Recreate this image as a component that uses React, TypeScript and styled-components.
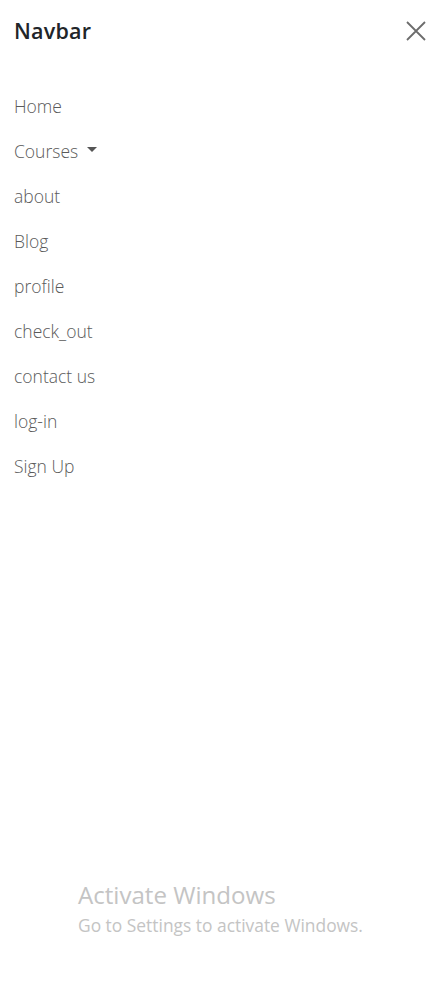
import React from "react";
import styled, { createGlobalStyle } from "styled-components";

const Global = createGlobalStyle`
  html, body { margin: 0; padding: 0; background: #fff; }
  body { font-family: "Open Sans", "Noto Sans", sans-serif; }
  * { box-sizing: border-box; }
`;

const Panel = styled.div`
  position: relative;
  width: 444px;
  height: 987px;
  background: #fff;
  overflow: hidden;
`;

const Header = styled.div`
  display: flex;
  align-items: center;
  justify-content: space-between;
  padding: 16px 14px 16px 14px;
  height: 62px;
`;

const Title = styled.h5`
  margin: 0;
  font-size: 21.5px;
  font-weight: 600;
  color: #212529;
  line-height: 30px;
  letter-spacing: 0.2px;
`;

const CloseButton = styled.button`
  border: 0;
  background: transparent;
  padding: 0;
  width: 24px;
  height: 24px;
  display: flex;
  align-items: center;
  justify-content: center;
  margin-right: 2px;
  cursor: pointer;
`;

const Body = styled.nav`
  padding: 21px 14px 0 14px;
`;

const NavList = styled.ul`
  list-style: none;
  margin: 0;
  padding: 0;
  display: flex;
  flex-direction: column;
`;

const NavItem = styled.li`
  height: 45px;
  display: flex;
  align-items: center;
`;

const NavLink = styled.a`
  font-size: 17.5px;
  font-weight: 300;
  color: #5a5a5a;
  text-decoration: none;
  display: flex;
  align-items: center;
  gap: 9px;
`;

const Caret = styled.span`
  display: inline-block;
  width: 0;
  height: 0;
  border-left: 5px solid transparent;
  border-right: 5px solid transparent;
  border-top: 5px solid #555;
  margin-top: -2px;
`;

const Watermark = styled.div`
  position: absolute;
  left: 78px;
  top: 879px;
  color: #c4c4c4;
  font-family: "Open Sans", sans-serif;
  pointer-events: none;
`;

const WatermarkTitle = styled.div`
  font-size: 24.1px;
  line-height: 32px;
  font-weight: 400;
`;

const WatermarkSub = styled.div`
  font-size: 17.4px;
  line-height: 28px;
  font-weight: 400;
`;

const links: { label: string; dropdown?: boolean }[] = [
  { label: "Home" },
  { label: "Courses", dropdown: true },
  { label: "about" },
  { label: "Blog" },
  { label: "profile" },
  { label: "check_out" },
  { label: "contact us" },
  { label: "log-in" },
  { label: "Sign Up" },
];

export default function App() {
  return (
    <Panel>
      <Global />
      <Header>
        <Title>Navbar</Title>
        <CloseButton aria-label="Close">
          <svg width="20" height="20" viewBox="0 0 20 20">
            <path d="M1 1 L19 19 M19 1 L1 19" stroke="#6c6c6c" strokeWidth="1.8" fill="none" />
          </svg>
        </CloseButton>
      </Header>
      <Body>
        <NavList>
          {links.map((l) => (
            <NavItem key={l.label}>
              <NavLink href="#">
                {l.label}
                {l.dropdown && <Caret />}
              </NavLink>
            </NavItem>
          ))}
        </NavList>
      </Body>
      <Watermark>
        <WatermarkTitle>Activate Windows</WatermarkTitle>
        <WatermarkSub>Go to Settings to activate Windows.</WatermarkSub>
      </Watermark>
    </Panel>
  );
}
